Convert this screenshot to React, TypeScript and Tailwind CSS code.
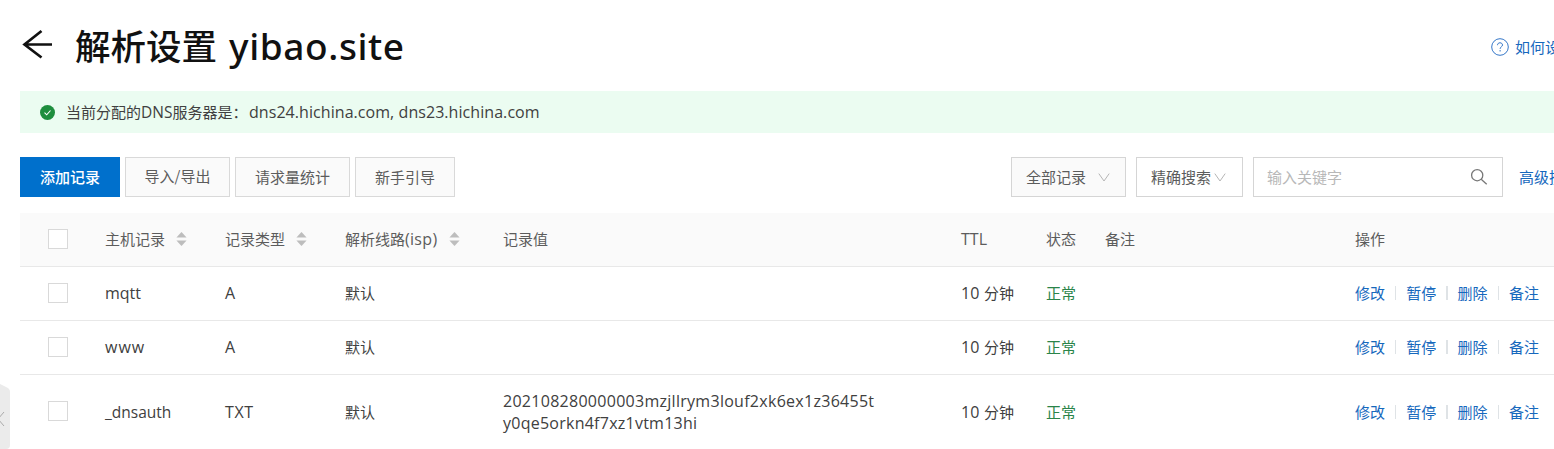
import React from "react";

const COLS =
  "grid grid-cols-[85px_120px_120px_158px_458px_85px_59px_250px_199px] items-center";

function Sorter({ className }: { className: string }) {
  return (
    <svg className={className} width="11" height="16" viewBox="0 0 11 16" fill="#bdbdbd">
      <path d="M5.5 1 10.6 6.6H.4z" />
      <path d="M5.5 15 .4 9.4h10.2z" />
    </svg>
  );
}

function Checkbox({ className = "" }: { className?: string }) {
  return <span className={`ml-7 block size-5 border border-[#d9d9d9] bg-white ${className}`} />;
}

function Chevron({ className }: { className: string }) {
  return (
    <svg className={className} width="12" height="9" viewBox="0 0 12 9" fill="none" stroke="#b5b5b5">
      <path d="M.8.6 6 8 11.2.6" />
    </svg>
  );
}

function Divider() {
  return <span className="mx-[10.1px] h-[14px] w-[1.1px] bg-[#dfe3e6]" />;
}

function Latin({ className = "", children }: { className?: string; children: React.ReactNode }) {
  return <span className={`font-['Open_Sans','Noto_Sans',sans-serif] ${className}`}>{children}</span>;
}

type RecordRow = {
  host: string;
  hostClass: string;
  type: string;
  value: React.ReactNode;
  height: string;
  boxClass: string;
};

const rows: RecordRow[] = [
  { host: "mqtt", hostClass: "text-[16px]", type: "A", value: "", height: "h-[54px] border-b pb-[2px]", boxClass: "" },
  {
    host: "www",
    hostClass: "text-[16px] tracking-[1px]",
    type: "A",
    value: "",
    height: "h-[54px] border-b pb-[2px]",
    boxClass: "",
  },
  {
    host: "_dnsauth",
    hostClass: "text-[15.5px]",
    type: "TXT",
    value: (
      <>
        <Latin className="block w-fit text-[16px] tracking-[0.28px]">202108280000003mzjllrym3louf2xk6ex1z36455t</Latin>
        <Latin className="block w-fit text-[16px] tracking-[0.25px]">y0qe5orkn4f7xz1vtm13hi</Latin>
      </>
    ),
    height: "h-[75px] pb-[2px]",
    boxClass: "mb-[2px]",
  },
];

export default function App() {
  return (
    <div className="relative h-[449px] w-full overflow-hidden bg-white pl-5 font-['Noto_Sans_CJK_SC',sans-serif] text-[15px] leading-[22px] whitespace-nowrap text-[#404040]">
      <header className="flex h-[91px] w-[1640px] items-center">
        <svg className="mt-[-3px] ml-[2px]" width="32" height="32" viewBox="0 0 32 32" fill="none" stroke="#111" strokeWidth="2.7">
          <path d="M30 16.5H2.5M19.5 3 2.5 16.5l17 13" />
        </svg>
        <h1 className="ml-[21px] w-[340px] text-[35.5px] leading-[50px] font-medium text-[#111]">
          解析设置 <span className="ml-[4px] font-['Noto_Sans',sans-serif] text-[37px] font-medium tracking-[0.6px]">yibao.site</span>
        </h1>
        <a className="mt-[2px] ml-[1076px] flex items-center text-[#1668bd]">
          <svg className="mr-[6px]" width="18" height="18" viewBox="0 0 18 18" fill="none" stroke="#3577c8">
            <circle cx="9" cy="9" r="8.3" />
            <path d="M6.5 7.2c0-1.6 1.1-2.4 2.5-2.4s2.5.9 2.5 2.2c0 1.7-2.4 1.9-2.4 3.9M9.1 12v1.5" />
          </svg>
          如何设
        </a>
      </header>

      <div className="flex h-[42px] items-center bg-[#ebfcf1] pl-5">
        <svg width="15" height="15" viewBox="0 0 15 15" className="mr-[11px]">
          <circle cx="7.5" cy="7.5" r="7.5" fill="#1e8e3e" />
          <path d="m4.5 7.6 2.2 2.2L10.5 5.5" fill="none" stroke="#fff" strokeWidth="1.1" />
        </svg>
        <span className="w-[183px]">当前分配的<Latin className="text-[15.5px]">DNS</Latin>服务器是：</span>
        <Latin className="text-[16px] tracking-[0.06px]">dns24.hichina.com, dns23.hichina.com</Latin>
      </div>

      <div className="mt-6 flex h-10 w-[1640px] items-stretch text-[#5c5c5c]">
        <button className="w-[100px] bg-[#0070cc] font-medium text-white">添加记录</button>
        <button className="ml-[5px] w-[105px] border border-[#d9d9d9] bg-[#fafafa] pb-[2px]">导入/导出</button>
        <button className="ml-[5px] w-[115px] border border-[#d9d9d9] bg-[#fafafa]">请求量统计</button>
        <button className="ml-[5px] w-[100px] border border-[#d9d9d9] bg-[#fafafa]">新手引导</button>
        <button className="ml-[556px] flex w-[115px] items-center border border-[#d5d5d5] bg-[#fafafa] pl-[14px]">
          全部记录
          <Chevron className="ml-[12px]" />
        </button>
        <button className="ml-[10px] flex w-[107px] items-center border border-[#d5d5d5] pl-[14px]">
          精确搜索
          <Chevron className="ml-[3px]" />
        </button>
        <div className="ml-[10px] flex w-[250px] items-center justify-between border border-[#d5d5d5] pr-[14px] pl-[13px] text-[#b8b8b8]">
          输入关键字
          <svg width="18" height="18" viewBox="0 0 18 18" fill="none" stroke="#777" strokeWidth="1.3">
            <circle cx="7.2" cy="7.2" r="5.6" />
            <path d="m11.2 11.2 5.5 5" />
          </svg>
        </div>
        <a className="ml-4 self-center text-[#1668bd]">高级搜</a>
      </div>

      <div className="mt-4 w-[1534px]">
        <div className={`${COLS} h-[54px] border-b border-[#e8e8e8] bg-[#fafafa] pb-[2px] text-[#5c5c5c]`}>
          <Checkbox />
          <span className="flex items-center">主机记录<Sorter className="ml-[11px]" /></span>
          <span className="flex items-center">记录类型<Sorter className="ml-[11px]" /></span>
          <span className="flex items-center">
            解析线路<Latin className="w-[33px] text-[16px] tracking-[0.3px]">(isp)</Latin>
            <Sorter className="ml-[11px]" />
          </span>
          <span>记录值</span>
          <Latin className="text-[16px]">TTL</Latin>
          <span>状态</span>
          <span>备注</span>
          <span>操作</span>
        </div>
        {rows.map((row) => (
          <div key={row.host} className={`${COLS} ${row.height} border-[#e8e8e8]`}>
            <Checkbox className={row.boxClass} />
            <Latin className={row.hostClass}>{row.host}</Latin>
            <Latin className="text-[16px] tracking-[0.6px]">{row.type}</Latin>
            <span>默认</span>
            <div>{row.value}</div>
            <span className="flex"><Latin className="w-[23px] text-[16px]">10</Latin>分钟</span>
            <span className="text-[#2a8449]">正常</span>
            <span />
            <span className="flex items-center text-[#1668bd]">
              修改<Divider />暂停<Divider />删除<Divider />备注
            </span>
          </div>
        ))}
      </div>

      <div className="absolute top-[384px] left-0 h-[65px] w-[10px]">
        <svg width="10" height="65" viewBox="0 0 10 65">
          <path d="M0 0 7 3.5Q10 5 10 8V61Q10 65 6 65H0z" fill="#ebebeb" />
          <path d="M4 28-2 35l6 7" fill="none" stroke="#aaa" />
        </svg>
      </div>
    </div>
  );
}
